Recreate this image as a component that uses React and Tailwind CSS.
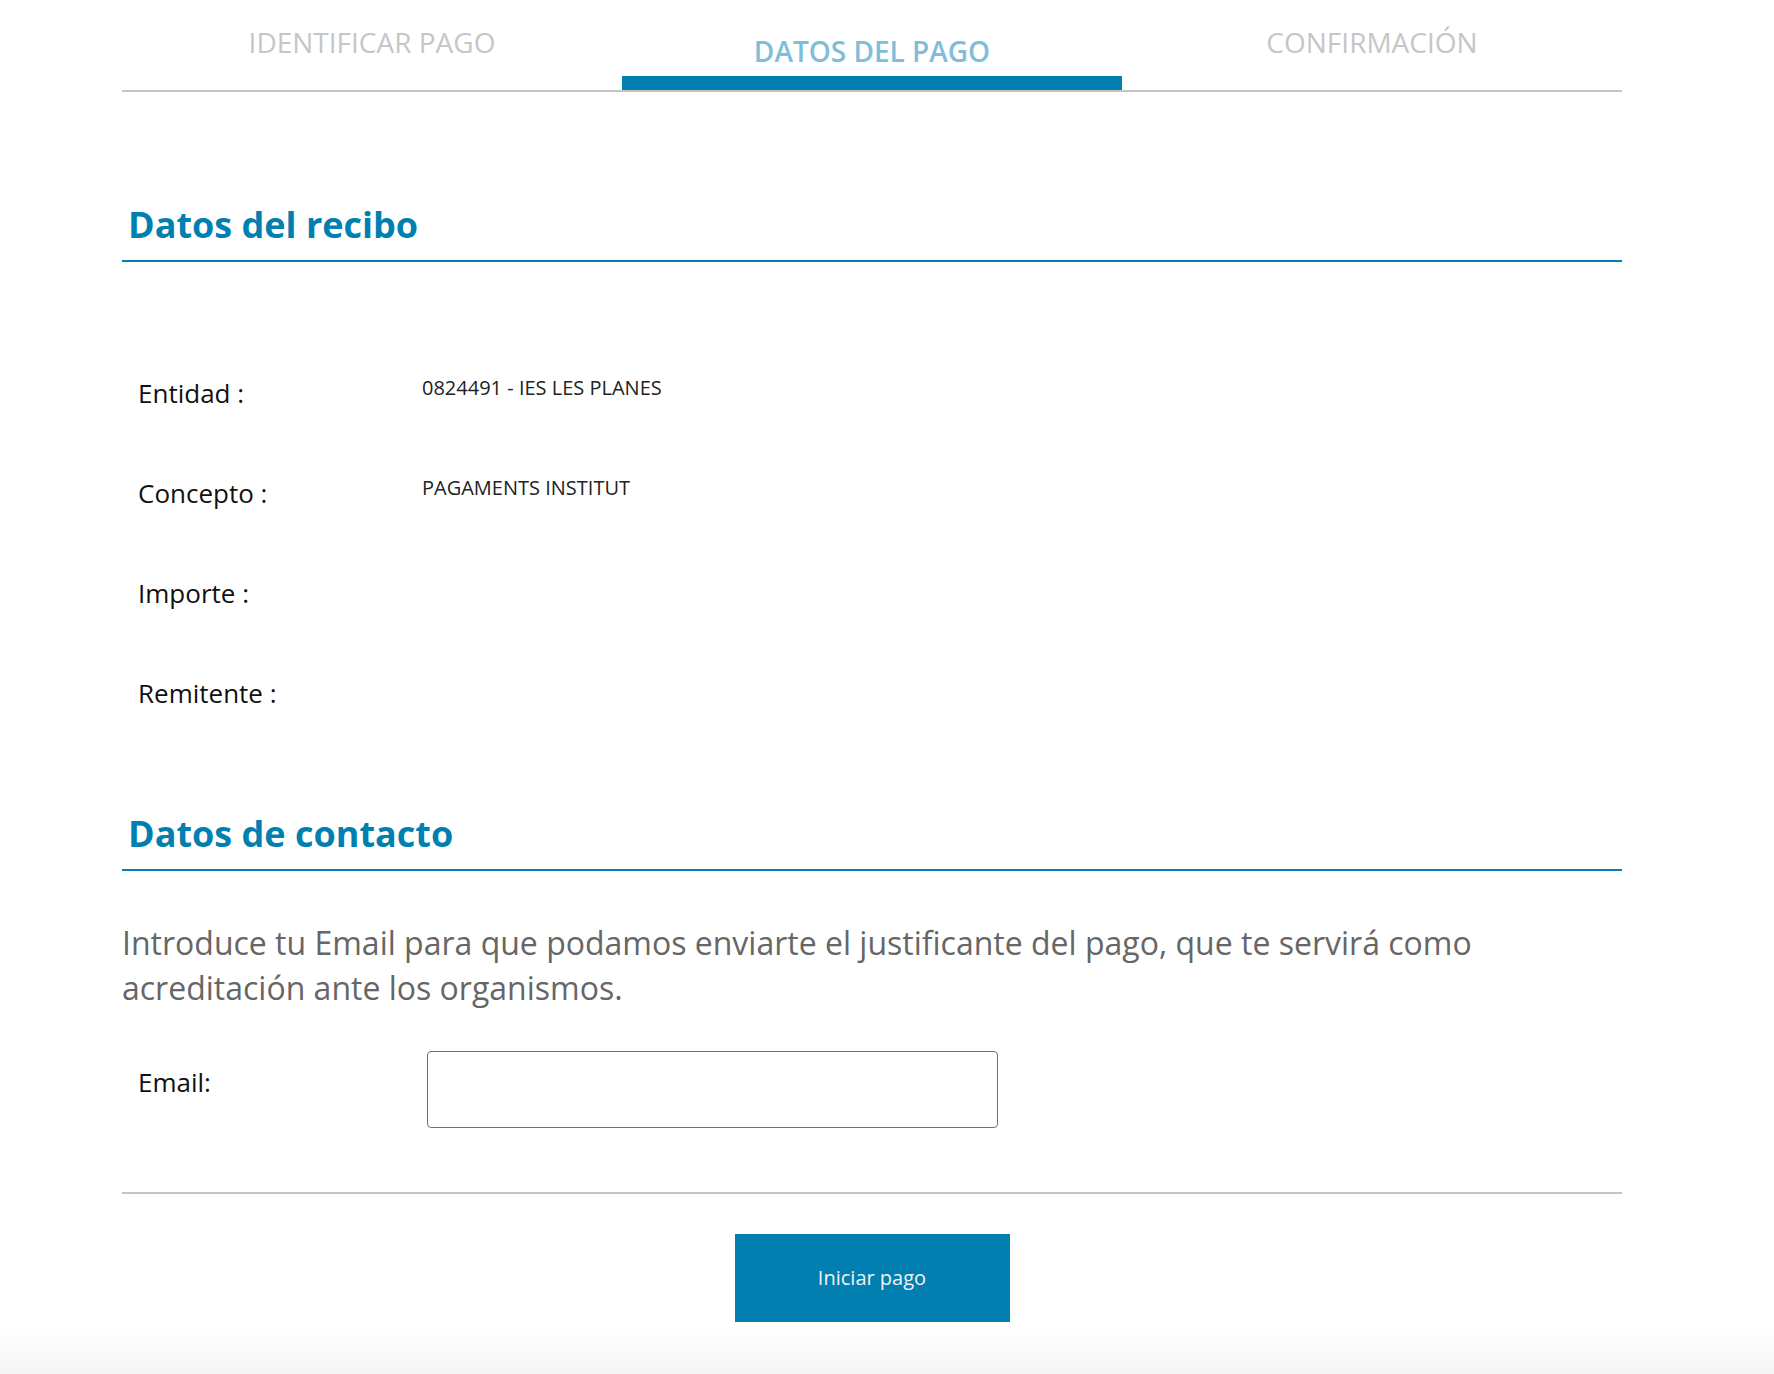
const tabs = [
  { label: 'IDENTIFICAR PAGO', active: false },
  { label: 'DATOS DEL PAGO', active: true },
  { label: 'CONFIRMACIÓN', active: false },
];

const receipt = [
  { label: 'Entidad :', value: '0824491 - IES LES PLANES' },
  { label: 'Concepto :', value: 'PAGAMENTS INSTITUT' },
  { label: 'Importe :', value: '' },
  { label: 'Remitente :', value: '' },
];

function SectionTitle({ children, className = '' }) {
  return (
    <h2
      className={`border-b-2 border-[#007fb0] pb-[10px] pl-[6px] text-[36px] font-bold leading-[50px] text-[#007fb0] ${className}`}
    >
      {children}
    </h2>
  );
}

export default function App() {
  return (
    <div className="flex min-h-[1374px] flex-col overflow-hidden bg-white font-['Open_Sans',sans-serif]">
      <div className="ml-[122px] w-[1500px]">
        {/* step tabs */}
        <nav className="flex h-[92px] border-b-2 border-[#c4c4c4]">
          {tabs.map((t) =>
            t.active ? (
              <div key={t.label} className="flex w-1/3 flex-col items-center">
                <span className="pt-[32px] text-[28px] font-semibold leading-[38px] text-[#80bdd8]">
                  {t.label}
                </span>
                <span className="mt-auto h-[14px] w-full bg-[#007fb0]" />
              </div>
            ) : (
              <div key={t.label} className="flex w-1/3 flex-col items-center">
                <span className="pt-[23px] text-[28px] leading-[38px] text-[#c6c6c6]">{t.label}</span>
              </div>
            )
          )}
        </nav>

        <SectionTitle className="mt-[108px]">Datos del recibo</SectionTitle>

        <div className="mt-[113px]">
          {receipt.map((r) => (
            <div key={r.label} className="flex h-[100px] items-start pl-[16px]">
              <span className="w-[284px] text-[26px] leading-[36px] text-[#111]">{r.label}</span>
              <span className="text-[20px] leading-[26px] text-[#222]">{r.value}</span>
            </div>
          ))}
        </div>

        <SectionTitle className="mt-[34px]">Datos de contacto</SectionTitle>

        <p className="mt-[49px] text-[32px] leading-[45px] text-[#666]">
          Introduce tu Email para que podamos enviarte el justificante del pago, que te servirá como
          acreditación ante los organismos.
        </p>

        <div className="mt-[41px] flex items-start pl-[16px]">
          <label className="mt-[13px] w-[284px] text-[26px] leading-[36px] text-[#111]">Email:</label>
          <input
            type="email"
            className="ml-[5px] h-[77px] w-[571px] rounded-[4px] border-[1.5px] border-[#707070] px-3 text-[20px] outline-none"
          />
        </div>

        <div className="mt-[64px] border-t-2 border-[#c4c4c4]" />

        <div className="mt-[40px] flex justify-center">
          <button className="h-[88px] w-[275px] bg-[#007fb0] text-[20px] text-[#f2f2f2]">Iniciar pago</button>
        </div>
      </div>
      <div className="mt-auto h-[48px] w-full bg-gradient-to-b from-white to-[#f5f5f5]" />
    </div>
  );
}
